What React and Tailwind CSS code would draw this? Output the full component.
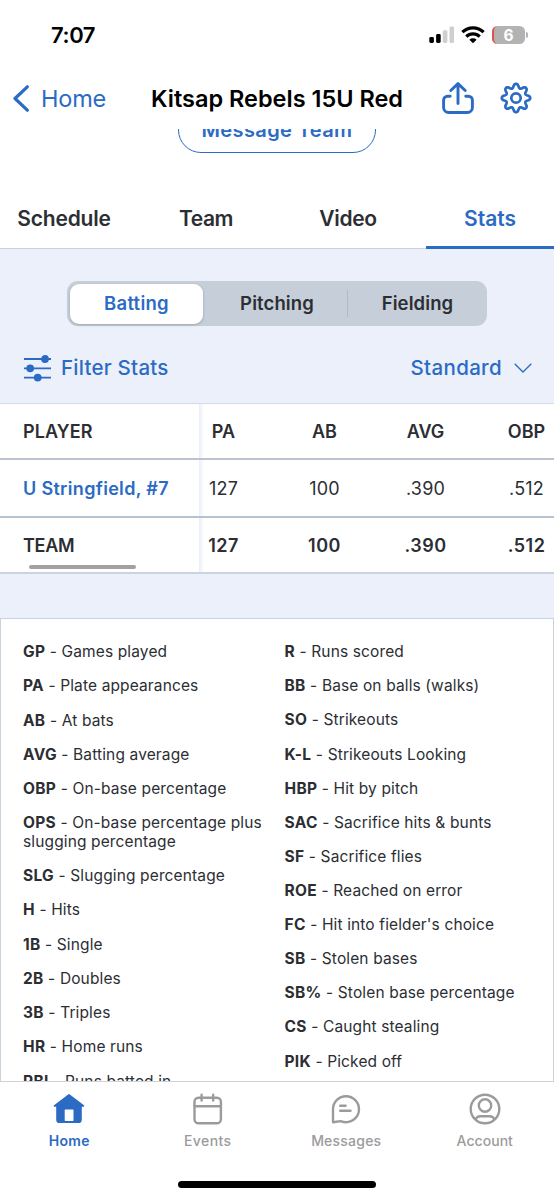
const leftTerms = [
  ["GP", "Games played"],
  ["PA", "Plate appearances"],
  ["AB", "At bats"],
  ["AVG", "Batting average"],
  ["OBP", "On-base percentage"],
  ["OPS", "On-base percentage plus slugging percentage"],
  ["SLG", "Slugging percentage"],
  ["H", "Hits"],
  ["1B", "Single"],
  ["2B", "Doubles"],
  ["3B", "Triples"],
  ["HR", "Home runs"],
  ["RBI", "Runs batted in"],
];

const rightTerms = [
  ["R", "Runs scored"],
  ["BB", "Base on balls (walks)"],
  ["SO", "Strikeouts"],
  ["K-L", "Strikeouts Looking"],
  ["HBP", "Hit by pitch"],
  ["SAC", "Sacrifice hits & bunts"],
  ["SF", "Sacrifice flies"],
  ["ROE", "Reached on error"],
  ["FC", "Hit into fielder's choice"],
  ["SB", "Stolen bases"],
  ["SB%", "Stolen base percentage"],
  ["CS", "Caught stealing"],
  ["PIK", "Picked off"],
];

// Outline of an eight-toothed gear with rounded teeth, centred on (16, 16).
const gearPath =
  Array.from({ length: 144 }, (_, i) => {
    const a = (i / 144) * Math.PI * 2;
    const c = Math.cos(8 * a);
    const r = 12.2 + 2 * Math.tanh(0.9 * c) / Math.tanh(0.9);
    const x = (16 + r * Math.sin(a)).toFixed(2);
    const y = (16 - r * Math.cos(a)).toFixed(2);
    return `${i ? "L" : "M"}${x} ${y}`;
  }).join("") + "Z";

function StatusBar() {
  return (
    <div className="flex h-[70px] shrink-0 items-center justify-between pr-[26px] pl-[51px] text-black">
      <span className="text-[22px] font-semibold tracking-[-0.4px]">7:07</span>
      <div className="flex items-center">
        <svg className="h-[18px] w-[26px]" viewBox="0 0 26 18">
          <rect x="0.3" y="11" width="4.6" height="6" rx="1.4" />
          <rect x="7.1" y="8" width="4.6" height="9" rx="1.4" />
          <rect x="13.8" y="4.3" width="4.6" height="12.7" rx="1.4" fill="#cfcfcf" />
          <rect x="20.5" y="0.5" width="4.6" height="16.5" rx="1.4" fill="#cfcfcf" />
        </svg>
        <svg className="ml-[6px] h-[18px] w-6" viewBox="0 0 24 18" fill="none" stroke="#000" strokeWidth="3.2">
          <path d="M1.4 6.2a15 15 0 0 1 21.2 0" />
          <path d="M5.3 10.6a9.4 9.4 0 0 1 13.4 0" />
          <path d="M12 17.2l-3.6-3.4a5.2 5.2 0 0 1 7.2 0z" fill="#000" stroke="none" />
        </svg>
        <div className="ml-[7px] flex h-[18px] w-[33px] items-center justify-center overflow-hidden rounded-[5.5px] border-l-2 border-[#e2524d] bg-[#b3b3b3] pt-px pr-[2px] text-[15.5px] leading-[17px] font-bold text-white">
          6
        </div>
        <div className="ml-[1px] h-[6px] w-[2px] rounded-r-full bg-[#b3b3b3]" />
      </div>
    </div>
  );
}

function NavBar() {
  return (
    <div className="flex h-[59px] shrink-0 items-center pb-[2px] pl-[13px]">
      <svg className="mb-px h-[27px] w-[17px]" viewBox="0 0 17 27" fill="none" stroke="#2b6bc4" strokeWidth="3.2" strokeLinecap="round" strokeLinejoin="round">
        <path d="M14.3 1.8 2 13.5 14.3 25.2" />
      </svg>
      <span className="ml-[11px] w-[110px] text-[23.5px] tracking-[-0.2px] text-[#2b6bc4]">Home</span>
      <span className="text-[23.5px] font-semibold whitespace-nowrap text-black">Kitsap Rebels 15U Red</span>
      <svg className="mb-px ml-[39px] h-8 w-8 shrink-0" viewBox="0 0 32 32" fill="none" stroke="#2b6bc4" strokeWidth="2.9" strokeLinecap="round" strokeLinejoin="round">
        <path d="M8.2 14.2H5.6a4 4 0 0 0-4 4v7.3a5 5 0 0 0 5 5h18.8a5 5 0 0 0 5-5v-7.3a4 4 0 0 0-4-4h-2.6" />
        <path d="M16 21.6V1.8M8.8 8.5 16 1.6l7.2 6.9" />
      </svg>
      <svg className="mb-px ml-[26px] h-8 w-8 shrink-0" viewBox="0 0 32 32" fill="none" stroke="#2b6bc4" strokeWidth="2.7" strokeLinejoin="round">
        <path d={gearPath} />
        <circle cx="16" cy="16" r="4.7" />
      </svg>
    </div>
  );
}

function Tabs() {
  return (
    <div className="grid h-[61px] shrink-0 grid-cols-[128px_156px_128px_142px] border-b border-[#c9d2dc] text-center text-[21px] leading-[61px] font-semibold text-[#2c2e33]">
      <span className="tracking-[-0.2px]">Schedule</span>
      <span className="tracking-[-0.5px]">Team</span>
      <span className="tracking-[-0.3px]">Video</span>
      <span className="relative h-[61px] w-[128px] justify-self-end border-b-[3px] border-[#2b6bc4] text-[#2b6bc4]">Stats</span>
    </div>
  );
}

function Segments() {
  return (
    <div className="mx-auto grid h-[45px] w-[420px] grid-cols-[137px_143px_140px] items-center rounded-[11px] bg-[#c5ced9] text-center text-[18.5px] font-semibold tracking-[0.1px] text-[#2c2e33]">
      <span className="mr-px ml-[3px] flex h-10 items-center justify-center rounded-[9px] bg-white tracking-[0.25px] text-[#2b6bc4] shadow-[0_1px_3px_rgba(0,0,0,0.2)]">Batting</span>
      <span className="pl-[3px]">Pitching</span>
      <span className="flex items-center">
        <i className="h-[27px] w-px bg-[#b0bac7]" />
        <span className="flex-1">Fielding</span>
      </span>
    </div>
  );
}

function Filters() {
  return (
    <div className="mt-[25px] flex items-center pr-[22px] pl-[23px] text-[20.5px] leading-[34px] font-medium text-[#2b6bc4]">
      <svg className="mb-px h-7 w-7" viewBox="0 0 28 28" stroke="#2b6bc4" strokeWidth="1.8" fill="#2b6bc4">
        <path d="M1 5h27M1 14.3h27M1 23.6h27" />
        <circle cx="22" cy="5" r="3" />
        <circle cx="7.2" cy="14.3" r="3" />
        <circle cx="14.7" cy="23.6" r="3" />
      </svg>
      <span className="ml-[10px] tracking-[0.24px]">Filter Stats</span>
      <span className="ml-auto tracking-[0.33px]">Standard</span>
      <svg className="ml-3 h-[10px] w-[18px]" viewBox="0 0 18 10" fill="none" stroke="#2b6bc4" strokeWidth="1.3">
        <path d="M.7.7 9 9 17.3.7" />
      </svg>
    </div>
  );
}

function Row({ name, cells, rowClass, nameClass, cellClass }) {
  return (
    <div className={`flex shrink-0 items-center overflow-hidden border-b-2 text-[18px] ${rowClass}`}>
      <div className={`flex h-full w-[199px] shrink-0 items-center pl-[23px] font-semibold ${nameClass}`}>{name}</div>
      <div className={`flex h-full shrink-0 items-center gap-[53px] bg-linear-to-r from-[#eaedf7] to-[#ffffff] to-[5px] pl-[0.5px] ${cellClass}`}>
        {cells.map((c) => (
          <span key={c} className="w-12 text-center">{c}</span>
        ))}
      </div>
    </div>
  );
}

function StatsTable() {
  return (
    <div className="flex shrink-0 flex-col border-t border-[#d4dce4] bg-white text-[#2c2e33]">
      <Row name="PLAYER" cells={["PA", "AB", "AVG", "OBP"]} rowClass="h-[56px] border-[#bcc2cf]" nameClass="tracking-[0.1px]" cellClass="font-semibold" />
      <Row name="U Stringfield, #7" cells={["127", "100", ".390", ".512"]} rowClass="h-[58px] border-[#b4c2d2]" nameClass="tracking-[0.32px] text-[#2b6bc4]" cellClass="tracking-[0.2px]" />
      <div className="relative">
        <Row name="TEAM" cells={["127", "100", ".390", ".512"]} rowClass="h-[56px] border-[#cbd3dc]" nameClass="tracking-[-0.3px]" cellClass="font-semibold tracking-[0.5px]" />
        <div className="absolute bottom-[5px] left-[29px] h-[4px] w-[107px] rounded-full bg-[#a1a1a1]" />
      </div>
    </div>
  );
}

function Terms({ items, className }) {
  return (
    <dl className={`flex flex-col ${className}`}>
      {items.map(([abbr, meaning]) => (
        <div key={abbr}>
          <dt className="inline font-bold tracking-[0.3px]">{abbr}</dt>
          <dd className="inline"> - {meaning}</dd>
        </div>
      ))}
    </dl>
  );
}

function Legend() {
  return (
    <div className="mt-[44px] flex min-h-0 flex-1 overflow-hidden border-x border-t border-[#c9d3dd] bg-white pt-[24.2px] pl-[22px] text-[15.5px] leading-[18.7px] tracking-[0.13px] text-[#2c2e33]">
      <Terms items={leftTerms} className="w-[261.5px] gap-[15.52px] pr-4" />
      <Terms items={rightTerms} className="gap-[15.42px]" />
    </div>
  );
}

function BottomItem({ label, className, children }) {
  return (
    <div className={`flex flex-col items-center pt-[11px] text-[14px] leading-[20px] ${className}`}>
      <svg className="mb-[6px] h-8 w-8" viewBox="0 0 32 32" fill="none" stroke="currentColor" strokeWidth="2.4" strokeLinecap="round" strokeLinejoin="round">
        {children}
      </svg>
      {label}
    </div>
  );
}

function BottomBar() {
  return (
    <div className="flex h-[119px] shrink-0 flex-col border-t border-[#cfd3d8] bg-white font-medium text-[#9b9b9b]">
      <div className="grid flex-1 grid-cols-4">
        <BottomItem label="Home" className="font-semibold tracking-[0.3px] text-[#2b6bc4]">
          <path d="M3.2 12.5V26.7a3.4 3.4 0 0 0 3.4 3.4h18.8a3.4 3.4 0 0 0 3.4-3.4V12.5z" fill="currentColor" stroke="none" />
          <path d="M16 1.8 1.5 12.9h29z" fill="currentColor" strokeWidth="1.6" />
          <rect x="11.7" y="16.6" width="8.8" height="11.4" rx="0.8" fill="#fff" stroke="none" />
        </BottomItem>
        <BottomItem label="Events" className="tracking-[0.4px]">
          <rect x="2.5" y="4.8" width="26.4" height="25.4" rx="4" />
          <path d="M2.5 13.2h26.4M9.6 1.8v5.8M21.2 1.8v5.8" />
        </BottomItem>
        <BottomItem label="Messages" className="tracking-[0.22px]">
          <path d="M3 29.2V16A13 13 0 1 1 16 29.2c-1.8 0-3.6-.4-5.4-1.1Z" />
          <path d="M10.2 12.8h5.4M10.2 17.7h10.3" />
        </BottomItem>
        <BottomItem label="Account" className="tracking-[0.05px]">
          <circle cx="16" cy="16" r="14.3" />
          <circle cx="16" cy="12.5" r="6.2" />
          <path d="M6.8 26.2c.8-2.3 2.2-3 4.6-3h9.2c2.4 0 3.8.7 4.6 3" />
        </BottomItem>
      </div>
      <div className="mx-auto mb-[12px] h-[7px] w-[198px] rounded-full bg-black" />
    </div>
  );
}

export default function App() {
  return (
    <div className="flex h-[1200px] w-[554px] flex-col overflow-hidden bg-white font-['Inter',sans-serif]">
      <StatusBar />
      <NavBar />
      <div className="flex h-[59px] shrink-0 items-start justify-center overflow-hidden">
        <div className="-mt-[22px] flex h-[46px] w-[198px] items-center justify-center rounded-full border-[1.5px] border-[#2b6bc4] text-[20px] font-semibold tracking-[0.4px] text-[#2b6bc4]">
          Message Team
        </div>
      </div>
      <Tabs />
      <div className="flex min-h-0 flex-1 flex-col bg-[#ebf0fa]">
        <div className="h-[154px] shrink-0 pt-[32px]">
          <Segments />
          <Filters />
        </div>
        <StatsTable />
        <Legend />
      </div>
      <BottomBar />
    </div>
  );
}
